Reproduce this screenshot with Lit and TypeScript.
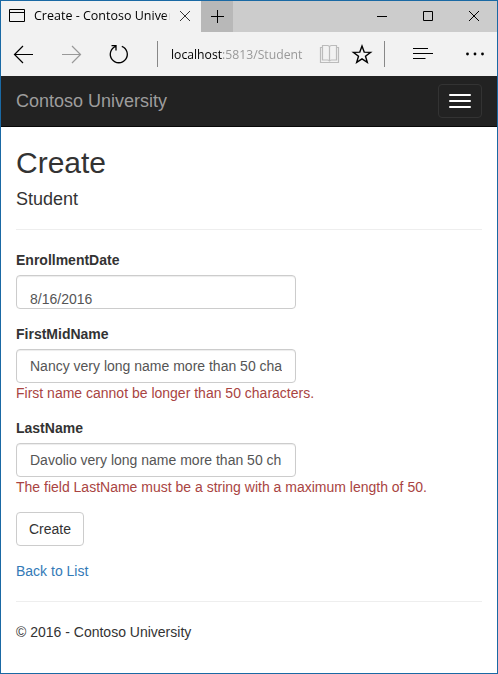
import { LitElement, html, css, svg, nothing } from "lit";
import { customElement, property } from "lit/decorators.js";

@customElement("browser-chrome")
class BrowserChrome extends LitElement {
  static styles = css`
    :host { display: block; font-family: "Open Sans", "Noto Sans", sans-serif; color: #000; }
    svg { display: block; flex: none; fill: none; stroke: #000; stroke-width: 1; }
    .titlebar { display: flex; height: 31px; background: #ccc; }
    .tab { display: flex; box-sizing: border-box; width: 200px; padding-left: 8px; background: #f2f2f2; }
    .title { width: 136px; margin-left: 9px; overflow: hidden; white-space: nowrap; font-size: 12.5px; line-height: 30px;
      -webkit-mask-image: linear-gradient(90deg, #000 131px, transparent 136px); }
    .new { width: 32px; background: #b8b8b8; }
    .controls { display: flex; margin-left: auto; margin-right: -1px; }
    .toolbar { display: flex; height: 44px; background: #f2f2f2; }
    .address { width: 148px; margin-left: 13px; white-space: nowrap; font-size: 13px; line-height: 45px; }
    .address-text { display: inline-block; transform: scaleX(.938); transform-origin: left; }
    .path { color: #999; }
  `;
  render() {
    return html`
      <div class="titlebar">
        <div class="tab">
          <svg width="16" height="31"><path d="M.5 8.500h15v12h-15zM0 11.500h16"/></svg>
          <div class="title">Create - Contoso University</div>
          <svg width="30" height="31"><path d="M10 10l10 10m0-10l-10 10" stroke="#333"/></svg>
        </div>
        <svg class="new" width="32" height="31"><path d="M16.500 9v13M10 15.500h13"/></svg>
        <div class="controls">
          <svg width="46" height="31"><path d="M17 15.500h10"/></svg>
          <svg width="46" height="31"><path d="M17.500 10.500h9v9h-9z"/></svg>
          <svg width="46" height="31"><path d="M17 10l10 10m0-10l-10 10"/></svg>
        </div>
      </div>
      <div class="toolbar">
        <svg width="48" height="44"><path d="M13.500 22.500H32M22 14l-8.500 8.500L22 31" stroke-width="1.200"/></svg>
        <svg width="48" height="44"><path d="M13 22.500h18.500M23 14l8.500 8.500L23 31" stroke="#999" stroke-width="1.200"/></svg>
        <svg width="59" height="44">
          <path d="M18.800 14.300A8.500 8.500 0 1 0 24.800 14.300M14.500 13.700H19V18.500" stroke-width="1.300"/>
        </svg>
        <svg width="2" height="44"><path d="M1.500 9v26" stroke="#888"/></svg>
        <div class="address"><span class="address-text">localhost<span class="path">:5813/Student</span></span></div>
        <svg width="24" height="44">
          <path d="M3.500 13.500h5q2 0 2 2v14q0-1.500-2-1.500h-5zM17.500 13.500h-5q-2 0-2 2v14q0-1.500 2-1.500h5zM3.500 15.500h-2v15h18v-15h-2" stroke="#bbb" stroke-width="1.200"/>
        </svg>
        <svg width="39" height="44">
          <path d="M19 14l2.200 6.100 6.400.2-5.100 3.900 1.800 6.200-5.300-3.600-5.300 3.600 1.800-6.200-5.100-3.900 6.400-.2z" stroke-width="1.400"/>
        </svg>
        <svg width="4" height="44"><path d="M2.500 9v26" stroke="#888"/></svg>
        <svg width="60" height="44"><path d="M27 16.500h15M27 21.500h20M27 26.500h12.500" stroke-width="1.200"/></svg>
        <svg width="50" height="44">
          ${[21.5, 29, 36.5].map((x) => svg`<circle cx=${x} cy="22" r="1.400" fill="#000" stroke="none"/>`)}
        </svg>
      </div>`;
  }
}

@customElement("form-field")
class FormField extends LitElement {
  @property() label = "";
  @property() value = "";
  @property() error = "";
  @property({ type: Boolean }) date = false;
  static styles = css`
    :host { display: block; margin-bottom: 15px; }
    .label { display: block; margin-bottom: 5px; font-weight: bold; }
    .control { box-sizing: border-box; width: 280px; height: 34px; padding: 6px 13px; overflow: hidden;
      border: 1px solid #ccc; border-radius: 4px; color: #555; background: #fff;
      box-shadow: inset 0 1px 1px rgba(0, 0, 0, .075); }
    .date { padding-top: 13px; }
    .value { overflow: hidden; white-space: nowrap; }
    .error { color: #a94442; white-space: nowrap; }
  `;
  render() {
    return html`
      <label class="label">${this.label}</label>
      <div class="control ${this.date ? "date" : ""}"><div class="value">${this.value}</div></div>
      ${this.error ? html`<div class="error">${this.error}</div>` : nothing}`;
  }
}

@customElement("app-root")
class AppRoot extends LitElement {
  static styles = css`
    :host { display: block; box-sizing: border-box; width: 498px; height: 674px; border: 1px solid #1a69a4;
      overflow: hidden; background: #fff; color: #333; font: 14px/20px "Liberation Sans", Arial, sans-serif; }
    .navbar { display: flex; box-sizing: border-box; height: 51px; padding: 8px 15px; justify-content: space-between;
      background: #222; border-bottom: 1px solid #080808; }
    .brand { color: #9d9d9d; font-size: 18px; line-height: 34px; }
    .toggle { display: flex; flex-direction: column; gap: 4px; box-sizing: border-box; width: 44px; height: 34px;
      padding: 9px 10px; border: 1px solid #333; border-radius: 4px; }
    .bar { height: 2px; border-radius: 1px; background: #fff; }
    .content { padding: 19px 15px 0; }
    h2 { margin: 0 0 10px; font-size: 30px; line-height: 33px; font-weight: 400; }
    h4 { margin: 0; font-size: 18px; line-height: 20px; font-weight: 400; }
    .rule { height: 1px; margin: 20px 0; background: #eee; }
    .create { display: block; width: 68px; height: 34px; padding: 0; border: 1px solid #ccc; border-radius: 4px;
      background: #fff; color: #333; font: inherit; }
    .back { display: block; margin-top: 15px; color: #337ab7; }
  `;
  render() {
    return html`
      <browser-chrome></browser-chrome>
      <div class="navbar">
        <div class="brand">Contoso University</div>
        <div class="toggle"><div class="bar"></div><div class="bar"></div><div class="bar"></div></div>
      </div>
      <div class="content">
        <h2>Create</h2>
        <h4>Student</h4>
        <div class="rule"></div>
        <form-field label="EnrollmentDate" value="8/16/2016" date></form-field>
        <form-field label="FirstMidName" value="Nancy very long name more than 50 cha"
          error="First name cannot be longer than 50 characters."></form-field>
        <form-field label="LastName" value="Davolio very long name more than 50 ch"
          error="The field LastName must be a string with a maximum length of 50."></form-field>
        <button class="create">Create</button>
        <a class="back">Back to List</a>
        <div class="rule"></div>
        <div>© 2016 - Contoso University</div>
      </div>`;
  }
}
